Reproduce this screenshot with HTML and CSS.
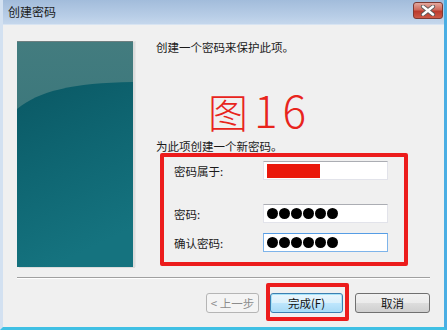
FILE: index.html
```html
<!DOCTYPE html>
<html lang="zh-CN">
<head>
  <meta charset="UTF-8" />
  <title>创建密码</title>
  <link rel="stylesheet" href="styles.css">
</head>
<body>
  <div class="window">
    <!-- Title bar -->
    <div class="titlebar">
      <span class="title">创建密码</span>
      <button class="close" aria-label="关闭">
        <svg width="16" height="11" viewBox="0 0 16 11">
          <path d="M3 1.5 L13 9.5 M13 1.5 L3 9.5" stroke="#5a5a5a" stroke-width="4.2" stroke-linecap="round" />
          <path d="M3 1.5 L13 9.5 M13 1.5 L3 9.5" stroke="#fff" stroke-width="2.4" stroke-linecap="round" />
        </svg>
      </button>
    </div>

    <!-- Wizard body -->
    <div class="main">
      <div class="banner">
        <svg width="116" height="226" viewBox="0 0 116 226">
          <defs>
            <linearGradient id="top" x1="0" y1="0" x2="0" y2="1">
              <stop offset="0" stop-color="#437c7f" />
              <stop offset="1" stop-color="#2f6f75" />
            </linearGradient>
            <linearGradient id="low" x1="0" y1="0" x2="0.3" y2="1">
              <stop offset="0" stop-color="#0a5864" />
              <stop offset="0.5" stop-color="#0f6672" />
              <stop offset="1" stop-color="#15737f" />
            </linearGradient>
          </defs>
          <rect width="116" height="226" fill="url(#top)" />
          <path d="M0 68 C 22 50, 55 42, 116 41 L116 226 L0 226 Z" fill="url(#low)" />
          <rect width="116" height="1" fill="#6d7f80" />
        </svg>
      </div>

      <div class="content">
        <p class="intro">创建一个密码来保护此项。</p>
        <div class="figure-label"><span class="fig-word">图</span><span class="fig-num">16</span></div>
        <p class="hint">为此项创建一个新密码。</p>

        <div class="highlight">
          <div class="field first">
            <label>密码属于:</label>
            <div class="input"><span class="redacted"></span></div>
          </div>
          <div class="field second">
            <label>密码:</label>
            <div class="input">
              <span class="dot"></span><span class="dot"></span><span class="dot"></span>
              <span class="dot"></span><span class="dot"></span><span class="dot"></span>
            </div>
          </div>
          <div class="field third">
            <label>确认密码:</label>
            <div class="input focused">
              <span class="dot"></span><span class="dot"></span><span class="dot"></span>
              <span class="dot"></span><span class="dot"></span><span class="dot"></span>
            </div>
          </div>
        </div>
      </div>
    </div>

    <!-- Footer -->
    <div class="separator"></div>
    <div class="buttons">
      <button class="btn disabled">&lt; 上一步</button>
      <span class="mark">
        <button class="btn default">完成(F)</button>
      </span>
      <button class="btn">取消</button>
    </div>
  </div>
</body>
</html>
```

FILE: styles.css
```css
/* Global */
body {
  margin: 0;
  padding: 0;
  background: #fff;
  font-family: "Noto Sans CJK SC", "Liberation Sans", sans-serif;
  color: #1a1a1a;
}
.window {
  width: 447px;
  height: 330px;
  box-sizing: border-box;
  background: #f0f0f0;
  border-left: 3px solid #d3e1f1;
  border-right: 3px solid #4aaee3;
  border-bottom: 3px solid #3fc0e4;
  display: flex;
  flex-direction: column;
}
/* Title bar */
.titlebar {
  height: 25px;
  flex-shrink: 0;
  display: flex;
  align-items: center;
  justify-content: space-between;
  padding: 0 0 0 5px;
  background: linear-gradient(#a2bcdb, #b9cee7 70%, #c5d7ec);
  border-bottom: 1px solid #d8e4f2;
  box-sizing: border-box;
}
.title {
  font-size: 12px;
  color: #1b1b1b;
  line-height: 1;
  margin-top: -1px;
}
.close {
  width: 30px;
  height: 17px;
  margin-top: -4px;
  margin-right: 1px;
  padding: 0;
  border: 1px solid #7d3a33;
  border-radius: 3px;
  background: linear-gradient(#e3a89e, #cf6a5c 45%, #bb3b2d 55%, #cc5a48);
  display: flex;
  align-items: center;
  justify-content: center;
}
/* Body */
.main {
  display: flex;
  padding: 16px 0 0 14px;
}
.banner {
  width: 116px;
  height: 226px;
  flex-shrink: 0;
  box-shadow: 2px 1px 0 #dcdcdc, 3px 0 0 #e6e6e6;
}
.banner svg {
  display: block;
}
.content {
  margin-left: 23px;
}
.intro,
.hint {
  margin: 0;
  font-size: 11.5px;
  line-height: 12px;
  white-space: nowrap;
}
.figure-label {
  margin: 35px 0 0 52px;
  height: 42px;
  display: flex;
  align-items: baseline;
  color: #e8241c;
  font-family: "Noto Sans CJK SC", "DejaVu Sans", sans-serif;
  font-weight: 300;
}
.fig-word {
  font-size: 40px;
  line-height: 42px;
  margin-right: 6px;
}
.fig-num {
  font-size: 44px;
  line-height: 42px;
  letter-spacing: 5px;
}
.hint {
  margin-top: 10px;
}
/* Annotation box round the fields */
.highlight {
  margin: 1px 0 0 4px;
  width: 248px;
  height: 113px;
  box-sizing: border-box;
  border: 4px solid #ec1c1c;
  border-radius: 2px;
  padding: 4px 16px 0 10px;
}
.field {
  display: flex;
  align-items: center;
  font-size: 11.5px;
}
.field label {
  width: 89px;
}
.second {
  margin-top: 24px;
}
.third {
  margin-top: 10px;
}
.input {
  width: 125px;
  height: 19px;
  box-sizing: border-box;
  background: #fff;
  border: 1px solid #e2e3ea;
  border-top-color: #abadb3;
  display: flex;
  align-items: center;
  gap: 1px;
  padding-left: 3px;
}
.input.focused {
  border-color: #7eb4ea;
  border-top-color: #569de5;
}
.redacted {
  width: 53px;
  height: 14px;
  background: #ea180c;
}
.dot {
  width: 11px;
  height: 11px;
  border-radius: 50%;
  background: #000;
}
/* Footer */
.separator {
  margin: 10px 14px 0 14px;
  height: 1px;
  background: #a0a0a0;
  border-bottom: 1px solid #fff;
}
.buttons {
  display: flex;
  justify-content: flex-end;
  align-items: flex-start;
  padding: 4px 14px 0 0;
}
.btn {
  height: 20px;
  margin-top: 10px;
  padding: 0;
  font-family: inherit;
  font-size: 11.5px;
  color: #111;
  border: 1px solid #707070;
  border-radius: 3px;
  background: linear-gradient(#f2f2f2, #ebebeb 50%, #dddddd 51%, #cfcfcf);
  width: 75px;
}
.btn.disabled {
  width: 53px;
  margin-right: 7px;
  color: #8c8c8c;
  border-color: #b5b5b5;
  background: #f4f4f4;
}
.btn.default {
  width: 73px;
  margin-top: 0;
  border-color: #3c7fb1;
  box-shadow: inset 0 0 0 1px #a7e3f9;
  background: linear-gradient(#eaf6fd, #d9f0fc 50%, #bee6fd 51%, #a7d9f5);
}
.mark {
  display: inline-flex;
  border: 4px solid #ec1c1c;
  border-radius: 2px;
  padding: 6px 2px 4px 0;
  margin-right: 6px;
}
```
